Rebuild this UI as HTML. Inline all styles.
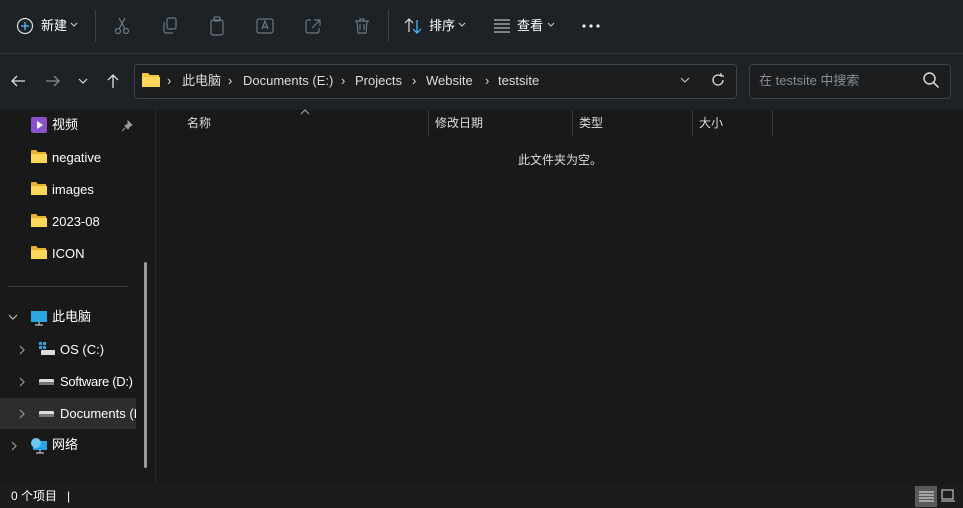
<!DOCTYPE html><html><head><meta charset="utf-8"><style>
*{margin:0;padding:0;box-sizing:border-box}
body{width:963px;height:508px;background:#191919;font-family:"Liberation Sans","Noto Sans CJK SC",sans-serif;color:#fff;font-size:12px;position:relative;overflow:hidden}
.a{position:absolute}
.top{left:0;top:0;width:963px;height:110px;background:#1c2226}
.sep{top:53px;left:0;width:963px;height:1px;background:#2f3538}
.t{white-space:nowrap;line-height:16px}
.b{position:absolute;white-space:nowrap;line-height:16px;top:73px;font-size:13px;color:#ddd}
svg{position:absolute}
.ic{stroke:#6b7780;fill:none;stroke-width:1.2}
</style></head><body>
<div class="a top"></div><div class="a sep"></div>
<svg style="left:15px;top:16px" width="20" height="20"><circle cx="10" cy="10" r="7.5" stroke="#ddd" fill="none" stroke-width="1.2"/><path d="M10 6v8M6 10h8" stroke="#4cc2ff" stroke-width="1.3"/></svg>
<div class="a t" style="left:41px;top:18px;font-size:13px">新建</div>
<svg style="left:70px;top:22px" width="8" height="6"><path d="M1 1l3 3 3-3" stroke="#ccc" fill="none"/></svg>
<div class="a" style="left:95px;top:10px;width:1px;height:32px;background:#3a4044"></div>
<svg style="left:112px;top:16px" width="20" height="20" class="ic"><circle cx="6" cy="15" r="2.5"/><circle cx="14" cy="15" r="2.5"/><path d="M7 13L13 2M13 13L7 2"/></svg>
<svg style="left:160px;top:16px" width="20" height="20" class="ic"><rect x="7" y="2" width="9" height="11" rx="2"/><path d="M4 6v9a2 2 0 002 2h7"/></svg>
<svg style="left:207px;top:15px" width="20" height="22" class="ic"><rect x="4" y="5" width="12" height="15" rx="2"/><rect x="7" y="2" width="6" height="4" rx="1"/></svg>
<svg style="left:255px;top:16px" width="20" height="20" class="ic"><rect x="2" y="3" width="16" height="14" rx="2"/><path d="M7 13l3-8 3 8M8 11h4"/></svg>
<svg style="left:303px;top:16px" width="20" height="20" class="ic"><path d="M8 4H5a2 2 0 00-2 2v9a2 2 0 002 2h9a2 2 0 002-2v-3M11 4h6v6M17 4l-8 8"/></svg>
<svg style="left:352px;top:16px" width="20" height="20" class="ic"><path d="M3 5h14M8 5V3h4v2M5 5l1 12h8l1-12M8 8v6M12 8v6"/></svg>
<div class="a" style="left:388px;top:10px;width:1px;height:32px;background:#3a4044"></div>
<svg style="left:403px;top:16px" width="20" height="20"><path d="M6 16V3M2 7l4-4 4 4" stroke="#ddd" fill="none" stroke-width="1.2"/><path d="M14 4v13M10 13l4 4 4-4" stroke="#4cc2ff" fill="none" stroke-width="1.2"/></svg>
<div class="a t" style="left:429px;top:18px;font-size:13px">排序</div>
<svg style="left:458px;top:22px" width="8" height="6"><path d="M1 1l3 3 3-3" stroke="#ccc" fill="none"/></svg>
<svg style="left:493px;top:17px" width="18" height="16"><path d="M1 3h16M1 7h16M1 11h16M1 15h16" stroke="#ddd" stroke-width="1.1"/></svg>
<div class="a t" style="left:517px;top:18px;font-size:13px">查看</div>
<svg style="left:547px;top:22px" width="8" height="6"><path d="M1 1l3 3 3-3" stroke="#ccc" fill="none"/></svg>
<svg style="left:581px;top:24px" width="20" height="4"><circle cx="3" cy="2" r="1.6" fill="#eee"/><circle cx="10" cy="2" r="1.6" fill="#eee"/><circle cx="17" cy="2" r="1.6" fill="#eee"/></svg>
<svg style="left:9px;top:72px" width="18" height="18"><path d="M16 9H3M8 4L3 9l5 5" stroke="#ddd" fill="none" stroke-width="1.3"/></svg>
<svg style="left:44px;top:72px" width="18" height="18"><path d="M2 9h13M10 4l5 5-5 5" stroke="#888" fill="none" stroke-width="1.3"/></svg>
<svg style="left:78px;top:77px" width="10" height="8"><path d="M1 2l4 4 4-4" stroke="#ddd" fill="none" stroke-width="1.2"/></svg>
<svg style="left:104px;top:72px" width="18" height="18"><path d="M9 16V3M4 8l5-5 5 5" stroke="#ddd" fill="none" stroke-width="1.3"/></svg>
<div class="a" style="left:134px;top:64px;width:603px;height:35px;border:1px solid #3d4347;border-radius:4px;background:#1b1d1f"></div>
<svg style="left:142px;top:72px" width="18" height="16"><path d="M0 2a1 1 0 011-1h5l2 2h9v12H0z" fill="#f8c640"/><path d="M0 5h18v10H0z" fill="#ffd65c"/></svg>
<div class="b" style="left:167px">›</div><div class="b" style="left:182px">此电脑</div>
<div class="b" style="left:228px">›</div><div class="b" style="left:243px">Documents (E:)</div>
<div class="b" style="left:341px">›</div><div class="b" style="left:355px">Projects</div>
<div class="b" style="left:412px">›</div><div class="b" style="left:426px">Website</div>
<div class="b" style="left:485px">›</div><div class="b" style="left:498px">testsite</div>
<svg style="left:680px;top:77px" width="10" height="7"><path d="M1 1l4 4 4-4" stroke="#ccc" fill="none"/></svg>
<svg style="left:710px;top:72px" width="16" height="16"><path d="M13 8a5 5 0 11-2-4M11 1v3h3" stroke="#ddd" fill="none" stroke-width="1.3"/></svg>
<div class="a" style="left:749px;top:64px;width:202px;height:35px;border:1px solid #3d4347;border-radius:4px;background:#1b1d1f"></div>
<div class="a t" style="left:759px;top:73px;font-size:13px;color:#8a8e91">在 testsite 中搜索</div>
<svg style="left:922px;top:71px" width="18" height="18"><circle cx="7.5" cy="7.5" r="5.5" stroke="#ddd" fill="none" stroke-width="1.4"/><path d="M11.5 11.5l5 5" stroke="#ddd" stroke-width="1.5"/></svg>
<div class="a" style="left:155px;top:110px;width:1px;height:375px;background:#2b2b2b"></div>
<div class="a" style="left:144px;top:262px;width:3px;height:206px;background:#9a9a9a;border-radius:2px"></div>
<svg style="left:31px;top:117px" width="16" height="16"><rect x="0" y="0" width="16" height="16" rx="2" fill="#8a52c9"/><path d="M6 4l6 4-6 4z" fill="#fff"/></svg>
<div class="a t" style="left:52px;top:117px;font-size:13px">视频</div>
<svg style="left:121px;top:120px" width="12" height="12"><path d="M7 1l4 4-2 1-2 3-3-3 3-2zM4 8l-3 3" stroke="#999" fill="#999"/></svg>
<div class="a" style="left:8px;top:286px;width:120px;height:1px;background:#3a3a3a"></div>
<div class="a" style="left:0;top:398px;width:136px;height:31px;background:#2d2d2d"></div>
<svg style="left:30px;top:148px" width="18" height="120">
<g id="fo"><path d="M1 3a1 1 0 011-1h4l2 2h8v10H1z" fill="#e9b12e"/><path d="M1 6h16v9H1z" fill="#ffd65c"/></g>
<use href="#fo" y="32"/><use href="#fo" y="64"/><use href="#fo" y="96"/></svg>
<div class="a t" style="left:52px;top:150px;font-size:13px">negative</div>
<div class="a t" style="left:52px;top:182px;font-size:13px">images</div>
<div class="a t" style="left:52px;top:214px;font-size:13px">2023-08</div>
<div class="a t" style="left:52px;top:246px;font-size:13px">ICON</div>
<svg style="left:8px;top:313px" width="10" height="8"><path d="M1 2l4 4 4-4" stroke="#bbb" fill="none" stroke-width="1.2"/></svg>
<svg style="left:30px;top:310px" width="18" height="17"><rect x="1" y="1" width="16" height="11" fill="#2aa7e0"/><path d="M9 12v3M5 15h8" stroke="#bbb" stroke-width="1.3"/></svg>
<div class="a t" style="left:52px;top:309px;font-size:13px">此电脑</div>
<svg style="left:18px;top:345px" width="8" height="10"><path d="M2 1l4 4-4 4" stroke="#999" fill="none" stroke-width="1.2"/></svg>
<svg style="left:18px;top:377px" width="8" height="10"><path d="M2 1l4 4-4 4" stroke="#999" fill="none" stroke-width="1.2"/></svg>
<svg style="left:18px;top:409px" width="8" height="10"><path d="M2 1l4 4-4 4" stroke="#999" fill="none" stroke-width="1.2"/></svg>
<svg style="left:10px;top:441px" width="8" height="10"><path d="M2 1l4 4-4 4" stroke="#999" fill="none" stroke-width="1.2"/></svg>
<svg style="left:38px;top:341px" width="18" height="16"><rect x="1" y="1" width="3" height="3" fill="#2aa7e0"/><rect x="5" y="1" width="3" height="3" fill="#2aa7e0"/><rect x="1" y="5" width="3" height="3" fill="#2aa7e0"/><rect x="5" y="5" width="3" height="3" fill="#2aa7e0"/><rect x="3" y="9" width="14" height="5" rx="1" fill="#ddd"/></svg>
<svg style="left:38px;top:376px" width="18" height="12"><rect x="1" y="3" width="15" height="6" rx="1.5" fill="#ddd"/><rect x="1" y="6" width="15" height="3" fill="#777"/></svg>
<svg style="left:38px;top:408px" width="18" height="12"><rect x="1" y="3" width="15" height="6" rx="1.5" fill="#ddd"/><rect x="1" y="6" width="15" height="3" fill="#777"/></svg>
<div class="a t" style="left:60px;top:342px;font-size:13px">OS (C:)</div>
<div class="a t" style="left:60px;top:374px;font-size:13px;letter-spacing:-0.3px">Software (D:)</div>
<div class="a t" style="left:60px;top:406px;font-size:13px;width:76px;overflow:hidden">Documents (E:)</div>
<svg style="left:30px;top:437px" width="18" height="18"><rect x="3" y="4" width="14" height="9" fill="#2aa7e0"/><circle cx="6" cy="6" r="5" fill="#6cc6f0"/><path d="M10 13v3M6 16h8" stroke="#bbb" stroke-width="1.3"/></svg>
<div class="a t" style="left:52px;top:437px;font-size:13px">网络</div>
<svg style="left:300px;top:109px" width="10" height="6"><path d="M1 5l4-4 4 4" stroke="#aaa" fill="none"/></svg>
<div class="a t" style="left:187px;top:115px;font-size:12px;color:#ddd">名称</div>
<div class="a" style="left:428px;top:110px;width:1px;height:26px;background:#3a3a3a"></div>
<div class="a t" style="left:435px;top:115px;color:#ddd">修改日期</div>
<div class="a" style="left:572px;top:110px;width:1px;height:26px;background:#3a3a3a"></div>
<div class="a t" style="left:579px;top:115px;color:#ddd">类型</div>
<div class="a" style="left:692px;top:110px;width:1px;height:26px;background:#3a3a3a"></div>
<div class="a t" style="left:699px;top:115px;color:#ddd">大小</div>
<div class="a" style="left:772px;top:110px;width:1px;height:26px;background:#3a3a3a"></div>
<div class="a t" style="left:518px;top:152px;color:#ddd">此文件夹为空。</div>
<div class="a" style="left:0;top:485px;width:963px;height:23px;background:#1c1c1c"></div>
<div class="a t" style="left:11px;top:488px;font-size:12px">0 个项目&nbsp;&nbsp;&nbsp;|</div>
<div class="a" style="left:915px;top:486px;width:22px;height:21px;background:#5a5a5a"></div>
<svg style="left:918px;top:490px" width="18" height="14"><path d="M1 2h15M1 5h15M1 8h15M1 11h15" stroke="#eee"/></svg>
<svg style="left:940px;top:488px" width="16" height="16"><rect x="2" y="2" width="11" height="9" stroke="#ddd" fill="none"/><path d="M1 13h14" stroke="#ddd"/></svg>
</body></html>
